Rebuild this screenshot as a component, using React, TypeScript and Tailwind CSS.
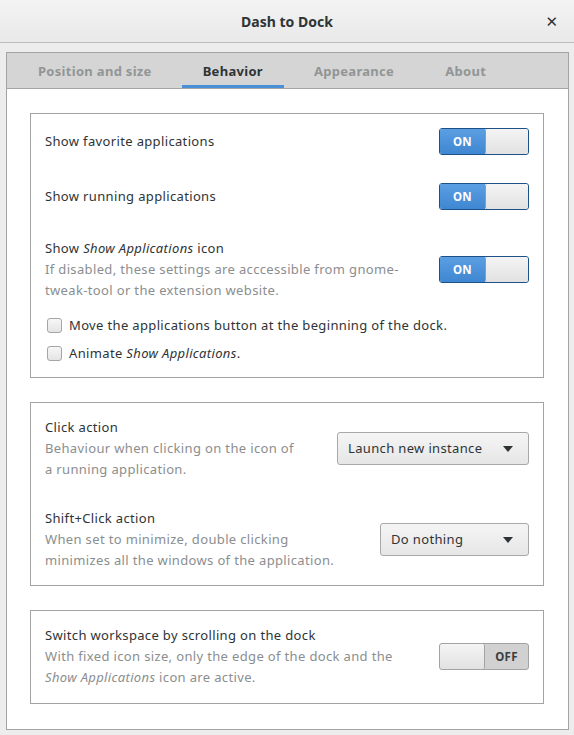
import React from "react";

const font = { fontFamily: '"Noto Sans", "DejaVu Sans", sans-serif' };

function Switch({ on }: { on: boolean }) {
  if (on) {
    return (
      <div className="flex h-[27px] w-[90px] shrink-0 overflow-hidden rounded-[3px] border border-[#1c5187]">
        <div className="flex w-[45px] items-center justify-center bg-gradient-to-b from-[#5b9ee2] to-[#3f87d2] text-[11.5px] font-bold tracking-wide text-white">
          ON
        </div>
        <div className="flex-1 rounded-[2px] border-l border-[#9a9a9a] bg-gradient-to-b from-[#f4f4f4] to-[#e2e2e2]" />
      </div>
    );
  }
  return (
    <div className="flex h-[27px] w-[90px] shrink-0 overflow-hidden rounded-[3px] border border-[#a3a3a3] bg-[#d1d1d1]">
      <div className="w-[45px] rounded-[2px] border-r border-[#a3a3a3] bg-gradient-to-b from-[#f4f4f4] to-[#e2e2e2]" />
      <div className="flex flex-1 items-center justify-center text-[11.5px] font-bold tracking-wide text-[#3b3e3f]">
        OFF
      </div>
    </div>
  );
}

function Combo({ label, width }: { label: string; width: string }) {
  return (
    <div
      className={`flex h-[33px] ${width} shrink-0 items-center justify-between rounded-[3px] border border-[#a8a8a8] bg-gradient-to-b from-[#f5f5f5] to-[#e6e6e6] pl-[10px] pr-[15px] text-[#2e3436]`}
    >
      <span>{label}</span>
      <svg width="10" height="6" viewBox="0 0 10 6">
        <path d="M0 0 L10 0 L5 6 Z" fill="#2e3436" />
      </svg>
    </div>
  );
}

function Check({ children }: { children: React.ReactNode }) {
  return (
    <div className="flex h-[21px] items-center">
      <div className="ml-[2px] mr-[7px] h-[15px] w-[15px] rounded-[3px] border border-[#a5a5a5] bg-gradient-to-b from-[#f7f7f7] to-[#e4e4e4]" />
      <span className="text-[#2e3436]">{children}</span>
    </div>
  );
}

export default function App() {
  const tabs = ["Position and size", "Behavior", "Appearance", "About"];
  return (
    <div className="h-[735px] w-[574px] overflow-hidden bg-[#ededed]" style={font}>
      <div className="relative flex h-[43px] items-center justify-center border-b border-[#bdbdbd] bg-gradient-to-b from-[#f3f3f3] to-[#e9e9e9]">
        <span className="text-[14px] font-bold text-[#2e3436]">Dash to Dock</span>
        <span className="absolute right-[16px] top-[10px] text-[15px] font-bold text-[#2e3436]">✕</span>
      </div>

      <div className="pt-[9px]">
        <div className="ml-[6px] w-[563px] border border-[#a4a4a4] bg-white">
          <div className="flex h-[36px] gap-[9px] border-b border-[#a4a4a4] bg-[#d5d5d5] pl-[10px]">
            {tabs.map((t) => (
              <div
                key={t}
                className={`flex items-center border-b-[3px] px-[21px] pt-[5px] text-[13px] font-bold tracking-[0.3px] ${
                  t === "Behavior" ? "border-[#4a90d9] text-[#2e3436]" : "border-transparent text-[#929595]"
                }`}
              >
                {t}
              </div>
            ))}
          </div>

          <div className="flex flex-col gap-[24px] pb-[25px] pl-[23px] pr-[24px] pt-[24px] text-[13px] tracking-[0.35px] text-[#2e3436]">
            <div className="border border-[#a3a3a3] px-[14px] pb-[13px]">
              <div className="mt-[14px] flex h-[27px] items-center justify-between">
                <span>Show favorite applications</span>
                <Switch on />
              </div>
              <div className="mt-[28px] flex h-[27px] items-center justify-between">
                <span>Show running applications</span>
                <Switch on />
              </div>
              <div className="mt-[28px] flex items-center justify-between leading-[21px]">
                <div>
                  <div>
                    Show <i>Show Applications</i> icon
                  </div>
                  <div className="text-[#8b8e8f]">
                    If disabled, these settings are acccessible from gnome-
                    <br />
                    tweak-tool or the extension website.
                  </div>
                </div>
                <Switch on />
              </div>
              <div className="mt-[14px]">
                <Check>Move the applications button at the beginning of the dock.</Check>
              </div>
              <div className="mt-[7px]">
                <Check>
                  Animate <i>Show Applications</i>.
                </Check>
              </div>
            </div>

            <div className="border border-[#a3a3a3] px-[14px] pb-[14px] leading-[21px]">
              <div className="mt-[14px] flex items-center justify-between">
                <div>
                  <div>Click action</div>
                  <div className="text-[#8b8e8f]">
                    Behaviour when clicking on the icon of
                    <br />a running application.
                  </div>
                </div>
                <Combo label="Launch new instance" width="w-[192px]" />
              </div>
              <div className="mt-[28px] flex items-center justify-between">
                <div>
                  <div>Shift+Click action</div>
                  <div className="text-[#8b8e8f]">
                    When set to minimize, double clicking
                    <br />
                    minimizes all the windows of the application.
                  </div>
                </div>
                <Combo label="Do nothing" width="w-[149px]" />
              </div>
            </div>

            <div className="border border-[#a3a3a3] px-[14px] pb-[15px] leading-[21px]">
              <div className="mt-[14px] flex items-center justify-between">
                <div>
                  <div>Switch workspace by scrolling on the dock</div>
                  <div className="text-[#8b8e8f]">
                    With fixed icon size, only the edge of the dock and the
                    <br />
                    <i>Show Applications</i> icon are active.
                  </div>
                </div>
                <Switch on={false} />
              </div>
            </div>
          </div>
        </div>
      </div>
    </div>
  );
}
